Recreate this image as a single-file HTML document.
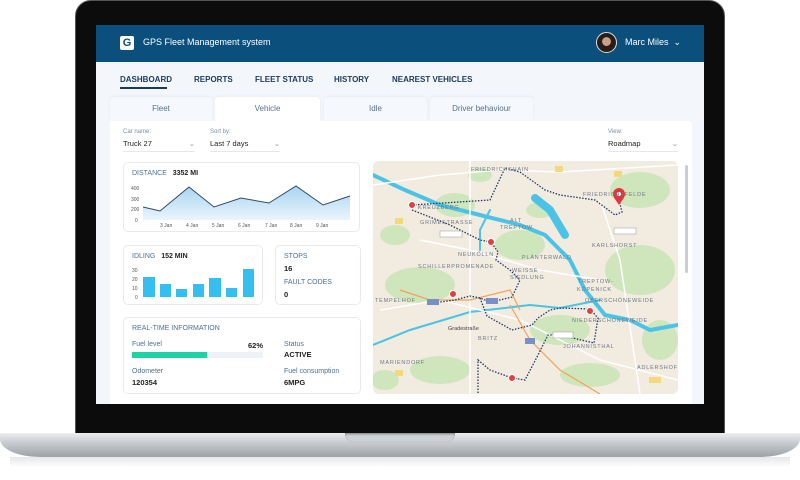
<!DOCTYPE html>
<html><head><meta charset="utf-8"><style>
*{margin:0;padding:0;box-sizing:border-box}
body{width:800px;height:480px;background:#fff;position:relative;overflow:hidden;font-family:"Liberation Sans",sans-serif;color:#2a3442}
.abs{position:absolute}
.lid{left:75px;top:0;width:650px;height:436px;background:#0c0c0d;border-radius:16px 16px 0 0;border:1px solid #555}
.screen{left:96px;top:25px;width:608px;height:379px;background:#f3f7fc;overflow:hidden}
.hdr{left:0;top:0;width:608px;height:37px;background:#0b4f7c;color:#fff}
.nav{font-size:8px;font-weight:bold;color:#1c3b5a;top:50px}
.tab{top:72px;height:24px;background:#f5f8fc;border-radius:4px 4px 0 0;font-size:8px;color:#58708a;text-align:center;line-height:24px;box-shadow:0 -1px 3px rgba(0,0,0,.05)}
.card{background:#fff;border:1px solid #e6ebf1;border-radius:5px}
.lbl{font-size:6px;color:#7890a8}
.val{font-size:7.5px;color:#222}
.ttl{font-size:7px;color:#4f6f95}
.b{font-weight:bold;color:#222}
</style></head><body>
<div class="abs lid"></div>
<div class="abs screen">
 <div class="abs hdr">
  <div class="abs" style="left:24px;top:11px;width:14px;height:14px;background:#fff;border-radius:2px;color:#0b4f7c;font-weight:bold;font-size:11px;text-align:center;line-height:14px">G</div>
  <div class="abs" style="left:47px;top:12px;font-size:9px">GPS Fleet Management system</div>
  <div class="abs" style="left:500px;top:7px;width:21px;height:21px;border-radius:50%;background:radial-gradient(circle at 50% 45%,#c9a08a 0 30%,#2a1d18 32%);border:1.5px solid #ddd"></div>
  <div class="abs" style="left:529px;top:12px;font-size:9px">Marc Miles &nbsp;⌄</div>
 </div>
 <div class="abs nav" style="left:24px">DASHBOARD</div>
 <div class="abs" style="left:24px;top:62px;width:47px;height:1.5px;background:#1c3b5a"></div>
 <div class="abs nav" style="left:98px">REPORTS</div>
 <div class="abs nav" style="left:159px">FLEET STATUS</div>
 <div class="abs nav" style="left:238px">HISTORY</div>
 <div class="abs nav" style="left:296px">NEAREST VEHICLES</div>
 <div class="abs tab" style="left:14px;width:102px">Fleet</div>
 <div class="abs tab" style="left:119px;width:105px;background:#fff">Vehicle</div>
 <div class="abs tab" style="left:228px;width:103px">Idle</div>
 <div class="abs tab" style="left:334px;width:103px">Driver behaviour</div>
 <div class="abs" style="left:14px;top:96px;width:582px;height:290px;background:#fff;border-radius:0 4px 0 0"></div>
 <div class="abs lbl" style="left:27px;top:104px">Car name:</div>
 <div class="abs val" style="left:27px;top:114px;width:72px;border-bottom:1px solid #e3e8ee;padding-bottom:3px">Truck 27<span style="float:right;color:#999">⌄</span></div>
 <div class="abs lbl" style="left:114px;top:104px">Sort by:</div>
 <div class="abs val" style="left:114px;top:114px;width:70px;border-bottom:1px solid #e3e8ee;padding-bottom:3px">Last 7 days<span style="float:right;color:#999">⌄</span></div>
 <div class="abs lbl" style="left:512px;top:104px">View:</div>
 <div class="abs val" style="left:512px;top:114px;width:70px;border-bottom:1px solid #e3e8ee;padding-bottom:3px">Roadmap<span style="float:right;color:#999">⌄</span></div>

 <div class="abs card" style="left:27px;top:137px;width:237px;height:70px">
  <div class="abs ttl" style="left:8px;top:7px">DISTANCE &nbsp; <span class="b">3352 MI</span></div>
  <svg class="abs" style="left:0;top:0" width="237" height="70">
   <g font-size="5" fill="#555" font-family="Liberation Sans"><text x="7" y="27">400</text><text x="7" y="38">300</text><text x="7" y="48">200</text><text x="11" y="59">0</text>
   <text x="36" y="64">3 Jan</text><text x="62" y="64">4 Jan</text><text x="88" y="64">5 Jan</text><text x="114" y="64">6 Jan</text><text x="141" y="64">7 Jan</text><text x="166" y="64">8 Jan</text><text x="192" y="64">9 Jan</text></g>
   <defs><linearGradient id="g" x1="0" y1="0" x2="0" y2="1"><stop offset="0" stop-color="#a9d4f2"/><stop offset="1" stop-color="#eaf5fc"/></linearGradient></defs>
   <path d="M19 44 L36 48 L65 24 L90 44 L117 35 L145 40 L172 23 L199 42 L226 33 L226 57 L19 57Z" fill="url(#g)"/>
   <path d="M19 44 L36 48 L65 24 L90 44 L117 35 L145 40 L172 23 L199 42 L226 33" fill="none" stroke="#2d4a6a" stroke-width="1"/>
  </svg>
 </div>
 <div class="abs card" style="left:27px;top:220px;width:140px;height:60px">
  <div class="abs ttl" style="left:8px;top:7px">IDLING &nbsp; <span class="b">152 MIN</span></div>
  <svg class="abs" style="left:0;top:0" width="140" height="60"><g font-size="5" fill="#555"><text x="8" y="26">30</text><text x="8" y="35">20</text><text x="8" y="44">10</text><text x="11" y="53">0</text></g>
  <g fill="#35bff0"><rect x="19" y="31" width="12" height="20"/><rect x="36" y="38" width="11" height="13"/><rect x="52" y="43" width="11" height="8"/><rect x="69" y="38" width="11" height="13"/><rect x="85" y="32" width="12" height="19"/><rect x="102" y="42" width="11" height="9"/><rect x="119" y="23" width="11" height="28"/></g></svg>
 </div>
 <div class="abs card" style="left:179px;top:220px;width:86px;height:60px">
  <div class="abs ttl" style="left:8px;top:7px">STOPS</div><div class="abs val b" style="left:8px;top:18px">16</div>
  <div class="abs ttl" style="left:8px;top:33px">FAULT CODES</div><div class="abs val b" style="left:8px;top:44px">0</div>
 </div>
 <div class="abs card" style="left:27px;top:292px;width:238px;height:77px">
  <div class="abs ttl" style="left:8px;top:7px">REAL-TIME INFORMATION</div>
  <div class="abs ttl" style="left:8px;top:23px">Fuel level</div><div class="abs val b" style="left:124px;top:23px">62%</div>
  <div class="abs" style="left:8px;top:34px;width:131px;height:6px;background:#eef1f5"></div>
  <div class="abs" style="left:8px;top:34px;width:75px;height:6px;background:#1fd2a5"></div>
  <div class="abs ttl" style="left:8px;top:50px">Odometer</div><div class="abs val b" style="left:8px;top:60px">120354</div>
  <div class="abs ttl" style="left:160px;top:23px">Status</div><div class="abs val b" style="left:160px;top:32px">ACTIVE</div>
  <div class="abs ttl" style="left:160px;top:50px">Fuel consumption</div><div class="abs val b" style="left:160px;top:60px">6MPG</div>
 </div>

 <svg class="abs" style="left:277px;top:136px;border-radius:6px" width="305" height="233" viewBox="373 161 305 233">
  <rect x="373" y="161" width="305" height="233" fill="#f2ebe0"/>
  <g fill="#cfe6bc">
   <ellipse cx="420" cy="285" rx="35" ry="18"/><ellipse cx="455" cy="205" rx="20" ry="12"/><ellipse cx="520" cy="245" rx="25" ry="15"/>
   <ellipse cx="640" cy="190" rx="30" ry="18"/><ellipse cx="640" cy="270" rx="35" ry="25"/><ellipse cx="560" cy="330" rx="30" ry="15"/>
   <ellipse cx="440" cy="370" rx="30" ry="14"/><ellipse cx="590" cy="375" rx="30" ry="12"/><ellipse cx="395" cy="235" rx="15" ry="10"/>
   <ellipse cx="660" cy="340" rx="18" ry="20"/><ellipse cx="540" cy="210" rx="14" ry="8"/><ellipse cx="385" cy="380" rx="14" ry="10"/><ellipse cx="480" cy="175" rx="12" ry="7"/>
  </g>
  <g fill="none" stroke="#4bc3e6" stroke-linecap="round">
   <path d="M373 175 L405 190 L440 205 L480 215 L520 225 L545 235 L570 260 L585 290 L605 315 L630 320 L650 330 L678 325" stroke-width="4"/>
   <path d="M535 198 L550 210 L565 235" stroke-width="8"/>
   <path d="M373 345 L410 330 L470 312 L530 305 L560 308 L600 300" stroke-width="2"/>
   <path d="M490 210 L480 230 L480 250" stroke-width="2"/>
  </g>
  <g fill="none" stroke="#fff" stroke-width="1.5"><path d="M373 185 L440 175 L500 170 L560 172 L678 165"/><path d="M420 240 L470 250 L540 270 L600 280"/><path d="M380 310 L440 300 L520 320 L600 360 L678 380"/><path d="M470 161 L470 394"/><path d="M600 200 L620 260 L640 394"/></g>
  <path d="M400 290 L430 300 L470 300 L510 290 L520 310" fill="none" stroke="#f0a35a" stroke-width="1.2"/>
  <path d="M510 305 L530 340 L560 370 L600 394" fill="none" stroke="#f0a35a" stroke-width="1.2"/>
  <g fill="none" stroke="#1f3a66" stroke-width="1.3" stroke-dasharray="1.5 1.5">
   <path d="M412 205 L490 200 L505 168 L520 172 L545 190 L560 195 L595 200 L615 215 L622 212 L619 200"/>
   <path d="M412 210 L450 225 L480 240 L491 242 L498 252 L496 260 L510 270 L520 280 L512 297 L500 300 L485 300 L480 298 L470 296 L455 300 L440 302"/>
   <path d="M480 298 L487 316 L512 330 L532 325 L538 318 L550 310 L560 308 L590 309 L598 318 L594 343 L560 335 L548 335 L538 355 L525 380 L512 378 L490 370 L478 360 L478 394"/>
  </g>
  <g fill="#e04040" stroke="#fff" stroke-width="1"><circle cx="412" cy="205" r="3.5"/><circle cx="491" cy="242" r="3.5"/><circle cx="453" cy="294" r="3.5"/><circle cx="590" cy="311" r="3.5"/><circle cx="512" cy="378" r="3.5"/></g>
  <path d="M619 205 C615 199 613 197 613 194 A6 6 0 0 1 625 194 C625 197 623 199 619 205Z" fill="#e3343c"/><circle cx="619" cy="194" r="2" fill="#fff"/>
  <g font-size="5.5" fill="#6e7a88" letter-spacing=".8"><text x="471" y="171">FRIEDRICHSHAIN</text><text x="583" y="196">FRIEDRICHSFELDE</text><text x="418" y="209">KREUZBERG</text><text x="420" y="224">GRIMESTRASSE</text><text x="510" y="222">ALT</text><text x="500" y="229">TREPTOW</text><text x="592" y="247">KARLSHORST</text><text x="458" y="256">NEUKÖLLN</text><text x="522" y="259">PLÄNTERWALD</text><text x="418" y="268">SCHILLERPROMENADE</text><text x="512" y="272">WEISSE</text><text x="510" y="279">SIEDLUNG</text><text x="578" y="283">TREPTOW-</text><text x="577" y="291">KÖPENICK</text><text x="375" y="302">TEMPELHOF</text><text x="585" y="302">OBERSCHÖNEWEIDE</text><text x="572" y="322">NIEDERSCHÖNEWEIDE</text><text x="478" y="340">BRITZ</text><text x="563" y="348">JOHANNISTHAL</text><text x="380" y="364">MARIENDORF</text><text x="637" y="369">ADLERSHOF</text><text x="448" y="330" fill="#444" letter-spacing="0">Gradestraße</text></g>
  <g fill="#fff" stroke="#999" stroke-width=".5"><rect x="440" y="231" width="22" height="6"/><rect x="614" y="228" width="22" height="6"/><rect x="553" y="332" width="20" height="6"/></g>
  <g fill="#f4d97a"><rect x="555" y="166" width="8" height="6"/><rect x="614" y="171" width="8" height="6"/><rect x="395" y="218" width="8" height="6"/><rect x="395" y="370" width="8" height="6"/><rect x="649" y="377" width="12" height="6"/></g>
  <g fill="#7a8fc8"><rect x="427" y="299" width="12" height="6"/><rect x="486" y="298" width="12" height="6"/><rect x="525" y="338" width="10" height="6"/></g>
 </svg>
 <div class="abs" style="left:589px;top:140px;width:3px;height:108px;background:#c9ced5;border-radius:2px"></div>
</div>
<div class="abs" style="left:0;top:433px;width:800px;height:24px;background:linear-gradient(#eceef0,#c8cbcf 40%,#9ea2a7);border-radius:0 0 40px 40px/0 0 18px 18px"></div>
<div class="abs" style="left:345px;top:433px;width:110px;height:9px;background:#cfd2d5;border-radius:0 0 8px 8px;box-shadow:inset 0 1px 2px #777"></div>
<div class="abs" style="left:10px;top:457px;width:780px;height:10px;background:linear-gradient(#e5e6e8,#fff)"></div>
</body></html>
